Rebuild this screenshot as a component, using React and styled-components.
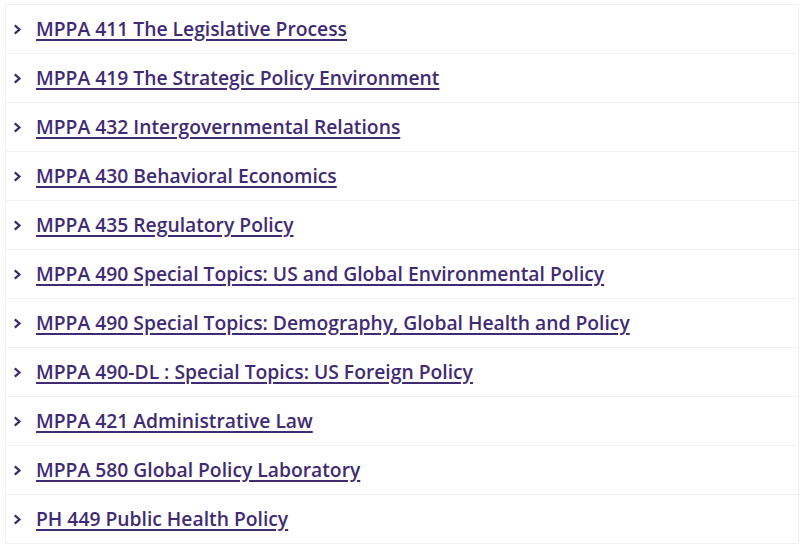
import React from 'react'
import styled, { createGlobalStyle } from 'styled-components'

const courses = [
  'MPPA 411 The Legislative Process',
  'MPPA 419 The Strategic Policy Environment',
  'MPPA 432 Intergovernmental Relations',
  'MPPA 430 Behavioral Economics',
  'MPPA 435 Regulatory Policy',
  'MPPA 490 Special Topics: US and Global Environmental Policy',
  'MPPA 490 Special Topics: Demography, Global Health and Policy',
  'MPPA 490-DL : Special Topics: US Foreign Policy',
  'MPPA 421 Administrative Law',
  'MPPA 580 Global Policy Laboratory',
  'PH 449 Public Health Policy',
]

function App() {
  return (
    <>
      <GlobalStyle />
      <List>
        {courses.map((title) => (
          <Row key={title}>
            <Chevron viewBox="0 0 8 10">
              <path d="M1.5 1.2 L5.8 5 L1.5 8.8" />
            </Chevron>
            <CourseLink href="#">{title}</CourseLink>
          </Row>
        ))}
      </List>
    </>
  )
}

export default App

const GlobalStyle = createGlobalStyle`
  body {
    margin: 0;
    background: #fff;
    font-family: "Open Sans", sans-serif;
  }
`

const List = styled.div`
  display: flex;
  flex-direction: column;
  margin: 4px 9px 0 5px;
  border: 1px solid #f1f1f1;
`

const Row = styled.div`
  display: flex;
  align-items: center;
  gap: 14px;
  height: 46px;
  padding: 0 0 2px 7px;
  border-top: 1px solid #f1f1f1;

  &:first-child {
    border-top: none;
  }
`

const Chevron = styled.svg`
  width: 9px;
  height: 11px;
  margin-top: 2px;
  fill: none;
  stroke: #3b2a67;
  stroke-width: 2;
`

const CourseLink = styled.a`
  color: #3f2b73;
  font-size: 19.3px;
  font-weight: 600;
  text-decoration: underline;
  text-underline-offset: 3px;
  text-decoration-thickness: 2px;
`
